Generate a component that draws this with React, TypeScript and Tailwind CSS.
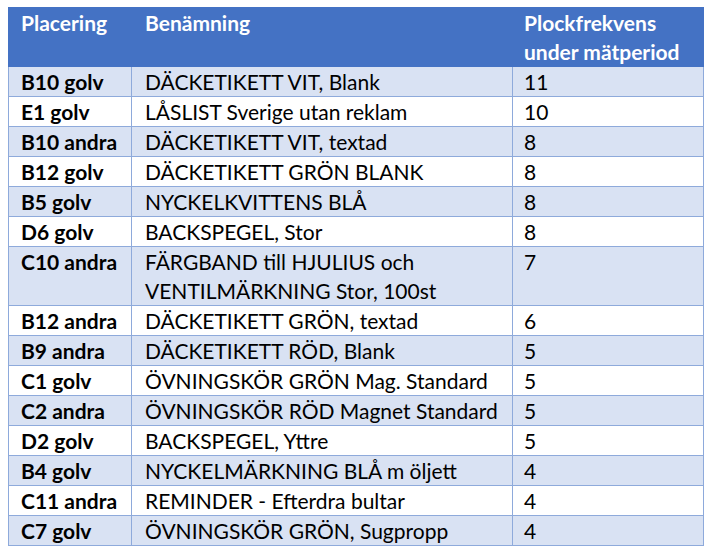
import React from "react";

const rows: [string, string, string][] = [
  ["B10 golv", "DÄCKETIKETT VIT, Blank", "11"],
  ["E1 golv", "LÅSLIST Sverige utan reklam", "10"],
  ["B10 andra", "DÄCKETIKETT VIT, textad", "8"],
  ["B12 golv", "DÄCKETIKETT GRÖN BLANK", "8"],
  ["B5 golv", "NYCKELKVITTENS BLÅ", "8"],
  ["D6 golv", "BACKSPEGEL, Stor", "8"],
  ["C10 andra", "FÄRGBAND till HJULIUS och VENTILMÄRKNING Stor, 100st", "7"],
  ["B12 andra", "DÄCKETIKETT GRÖN, textad", "6"],
  ["B9 andra", "DÄCKETIKETT RÖD, Blank", "5"],
  ["C1 golv", "ÖVNINGSKÖR GRÖN Mag. Standard", "5"],
  ["C2 andra", "ÖVNINGSKÖR RÖD Magnet Standard", "5"],
  ["D2 golv", "BACKSPEGEL, Yttre", "5"],
  ["B4 golv", "NYCKELMÄRKNING BLÅ m öljett", "4"],
  ["C11 andra", "REMINDER - Efterdra bultar", "4"],
  ["C7 golv", "ÖVNINGSKÖR GRÖN, Sugpropp", "4"],
];

export default function App() {
  return (
    <div className="w-[717px] h-[559px] bg-white pl-[8px] pt-[7px]" style={{ fontFamily: "Lato, 'Open Sans', sans-serif" }}>
      <table className="border-collapse table-fixed w-[695px] text-[21px] leading-[29px] text-black">
        <colgroup>
          <col className="w-[123px]" />
          <col className="w-[381px]" />
          <col className="w-[191px]" />
        </colgroup>
        <thead>
          <tr className="bg-[#4472C4] text-white font-bold align-top">
            <th className="text-left pl-[12px] border border-[#4472C4]">Placering</th>
            <th className="text-left pl-[13px] border border-[#4472C4]">Benämning</th>
            <th className="text-left pl-[11px] border border-[#4472C4] whitespace-nowrap">Plockfrekvens<br />under mätperiod</th>
          </tr>
        </thead>
        <tbody>
          {rows.map((r, i) => (
            <tr key={i} className={i % 2 === 0 ? "bg-[#D9E2F3] align-top" : "bg-white align-top"}>
              <td className="pl-[12px] font-bold border border-[#8EAADB] whitespace-nowrap">{r[0]}</td>
              <td className="pl-[13px] pr-[8px] border border-[#8EAADB]">{r[1]}</td>
              <td className="pl-[11px] border border-[#8EAADB]">{r[2]}</td>
            </tr>
          ))}
        </tbody>
      </table>
    </div>
  );
}
